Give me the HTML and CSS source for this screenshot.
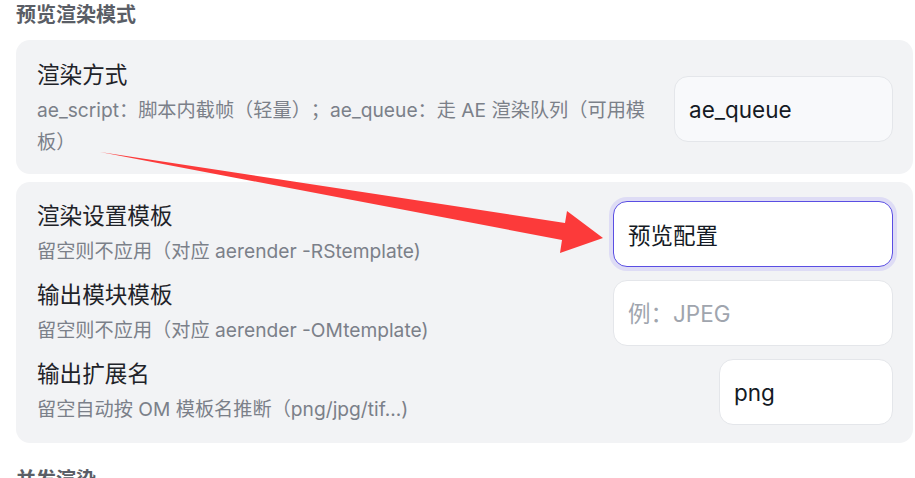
FILE: index.html
```html
<!DOCTYPE html>
<html lang="zh-CN">
<head>
    <meta charset="UTF-8">
    <meta name="viewport" content="width=device-width, initial-scale=1.0">
    <title>预览渲染模式</title>
    <link rel="stylesheet" href="styles.css">
</head>
<body>
    <div class="page">
        <section class="section">
            <h3 class="section-title">预览渲染模式</h3>

            <div class="card">
                <div class="field">
                    <div class="field-text">
                        <div class="field-label">渲染方式</div>
                        <div class="field-desc">ae_script：脚本内截帧（轻量）；ae_queue：走 AE 渲染队列（可用模板）</div>
                    </div>
                    <input class="input input-mode" type="text" value="ae_queue">
                </div>
            </div>

            <div class="card card-group">
                <div class="field">
                    <div class="field-text">
                        <div class="field-label">渲染设置模板</div>
                        <div class="field-desc">留空则不应用（对应 aerender -RStemplate)</div>
                    </div>
                    <input class="input input-wide is-focused" type="text" value="预览配置">
                </div>
                <div class="field">
                    <div class="field-text">
                        <div class="field-label">输出模块模板</div>
                        <div class="field-desc">留空则不应用（对应 aerender -OMtemplate)</div>
                    </div>
                    <input class="input input-wide" type="text" placeholder="例：JPEG">
                </div>
                <div class="field">
                    <div class="field-text">
                        <div class="field-label">输出扩展名</div>
                        <div class="field-desc">留空自动按 OM 模板名推断（png/jpg/tif...)</div>
                    </div>
                    <input class="input input-short" type="text" value="png">
                </div>
            </div>
        </section>

        <section class="section">
            <h3 class="section-title">并发渲染</h3>
        </section>
    </div>

    <!-- annotation arrow drawn over the form -->
    <svg class="arrow" width="915" height="478" viewBox="0 0 915 478">
        <polygon fill="#fc3a3a" points="100,152 565,223 567,211 603,238 560,253 562,240"/>
    </svg>
</body>
</html>
```

FILE: styles.css
```css
body {
    margin: 0;
    padding: 0;
    background: #ffffff;
    font-family: Inter, "Noto Sans CJK SC", sans-serif;
    text-spacing-trim: space-all;
    overflow: hidden;
}
.page {
    padding: 0 2px 0 16px;
}
.section-title {
    margin: 0;
    font-size: 20px;
    line-height: 30px;
    font-weight: 700;
    color: #5a5e66;
}
.section + .section {
    margin-top: 22px;
}
.card {
    background: #f2f3f5;
    border-radius: 14px;
    padding: 20px 20px 16px 21px;
    margin-top: 10px;
}
.card-group {
    margin-top: 8px;
    padding: 19px 20px 18px 21px;
    display: flex;
    flex-direction: column;
    gap: 13px;
}
.field {
    display: flex;
    align-items: center;
    gap: 20px;
}
.field-text {
    flex: 1;
    min-width: 0;
}
.field-label {
    font-size: 22.6px;
    line-height: 30px;
    color: #1f2329;
}
.field-desc {
    margin-top: 4px;
    font-size: 19.2px;
    line-height: 32px;
    color: #7b8089;
}
.input {
    box-sizing: border-box;
    height: 66px;
    padding: 0 14px;
    border: 1px solid #e4e6ea;
    border-radius: 14px;
    background: #ffffff;
    font-family: Inter, "Noto Sans CJK SC", sans-serif;
    font-size: 22.5px;
    color: #141a24;
    outline: none;
    flex-shrink: 0;
}
.input::placeholder {
    color: #a0a5ae;
}
.input-mode {
    width: 219px;
    background: #f8f9fb;
}
.input-wide {
    width: 280px;
}
.input-short {
    width: 174px;
}
.is-focused {
    border-color: #5a4ee3;
    box-shadow: 0 0 0 4px #dedcf5;
}
.arrow {
    position: absolute;
    left: 0;
    top: 0;
    pointer-events: none;
}
```
